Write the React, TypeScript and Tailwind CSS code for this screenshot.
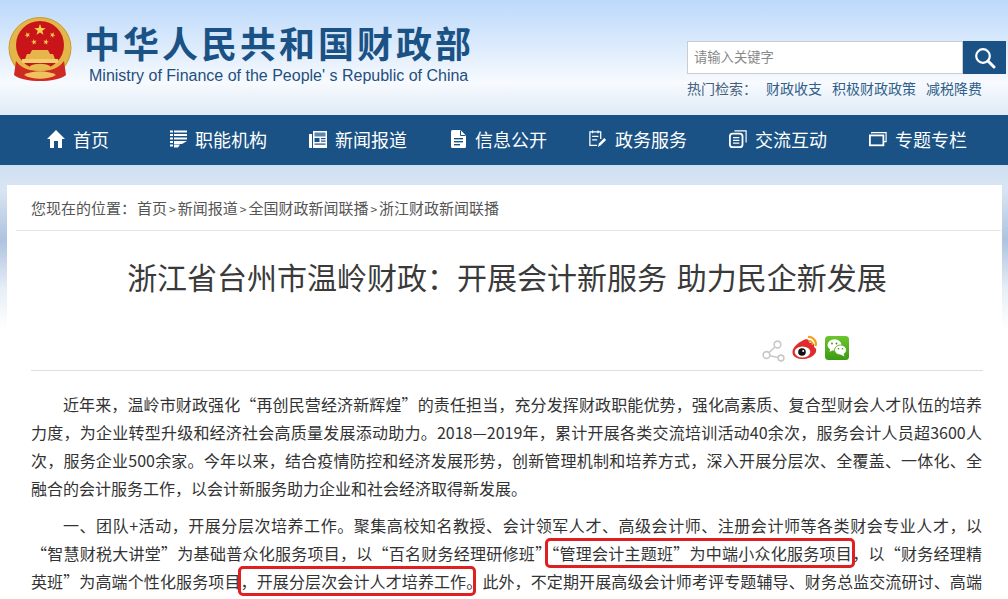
import React from "react";

const cjk = "font-['Noto_Sans_CJK_SC','Liberation_Sans',sans-serif]";

function Emblem() {
  const star = (cx: number, cy: number, r: number, rot = 0) => {
    const pts: string[] = [];
    for (let i = 0; i < 10; i++) {
      const a = (Math.PI / 5) * i - Math.PI / 2 + rot;
      const rr = i % 2 === 0 ? r : r * 0.4;
      pts.push(`${(cx + rr * Math.cos(a)).toFixed(2)},${(cy + rr * Math.sin(a)).toFixed(2)}`);
    }
    return <polygon key={`${cx}-${cy}`} points={pts.join(" ")} fill="#f5d04a" />;
  };
  return (
    <svg width="64" height="68" viewBox="0 0 64 68" className="shrink-0">
      <ellipse cx="32" cy="31" rx="31" ry="30.5" fill="#e3b64a" />
      <ellipse cx="32" cy="31" rx="31" ry="30.5" fill="none" stroke="#c99a35" strokeWidth="1" />
      <circle cx="32" cy="28" r="24" fill="#c9151a" />
      {star(32, 13, 6)}
      {star(19.5, 18, 3, -0.4)}
      {star(44.5, 18, 3, 0.4)}
      {star(26, 25, 3, -0.2)}
      {star(38, 25, 3, 0.2)}
      <path d="M17 42 L47 42 L45 37 L42 37 L40 33 L24 33 L22 37 L19 37 Z" fill="#e7b54b" />
      <rect x="14" y="42" width="36" height="4" fill="#f1cf70" />
      <path d="M8 44 C14 52 22 54 32 54 C42 54 50 52 56 44 L58 58 C48 66 16 66 6 58 Z" fill="#cf2a22" />
      <path d="M16 58 C24 53 40 53 48 58 C40 63 24 63 16 58 Z" fill="#eec35d" />
      <path d="M22 49 C27 46 37 46 42 49 L42 52 L22 52 Z" fill="#e8bb52" />
    </svg>
  );
}

const white = "#fff";

function HomeIcon() {
  return (
    <svg width="18" height="18" viewBox="0 0 18 18">
      <path d="M9 0 L18 9 L15 9 L15 18 L11 18 L11 11 L7 11 L7 18 L3 18 L3 9 L0 9 Z" fill={white} />
    </svg>
  );
}
function OrgIcon() {
  return (
    <svg width="17" height="18" viewBox="0 0 17 18" fill={white}>
      <rect x="0" y="0.5" width="3" height="2" />
      <rect x="4" y="0.5" width="13" height="2" />
      <rect x="0" y="4" width="3" height="2" />
      <rect x="4" y="4" width="13" height="2" />
      <rect x="0" y="7.5" width="3" height="2" />
      <rect x="4" y="7.5" width="13" height="2" />
      <rect x="0" y="11" width="3" height="2" />
      <path d="M4 11 H17 L12 14 H4 Z" />
      <rect x="0" y="14.5" width="3" height="2" />
      <path d="M4 14.5 H10 L8 17.5 H4 Z" />
    </svg>
  );
}
function NewsIcon() {
  return (
    <svg width="18" height="18" viewBox="0 0 18 18">
      <path d="M0 4 H3 V18 H1 Q0 18 0 17 Z" fill={white} />
      <rect x="4" y="1" width="14" height="17" fill={white} />
      <rect x="5.5" y="2.5" width="11" height="4" fill="#1a5285" opacity="0.7" />
      <rect x="5.5" y="8" width="5" height="4" fill="#1a5285" />
      <rect x="12" y="8" width="4.5" height="1.2" fill="#1a5285" />
      <rect x="12" y="10.5" width="4.5" height="1.2" fill="#1a5285" />
      <rect x="5.5" y="13.5" width="11" height="1.2" fill="#1a5285" />
    </svg>
  );
}
function DocIcon() {
  return (
    <svg width="15" height="18" viewBox="0 0 15 18">
      <path d="M1.5 0 H9.5 L15 5.5 V16.5 Q15 18 13.5 18 H1.5 Q0 18 0 16.5 V1.5 Q0 0 1.5 0 Z" fill={white} />
      <path d="M9.5 0.5 V5.5 H14.5" fill="none" stroke="#1a5285" strokeWidth="1" />
      <rect x="3" y="8" width="9" height="1.4" fill="#1a5285" />
      <rect x="3" y="11" width="9" height="1.4" fill="#1a5285" />
      <rect x="3" y="14" width="6" height="1.4" fill="#1a5285" />
    </svg>
  );
}
function ServiceIcon() {
  return (
    <svg width="20" height="20" viewBox="0 0 20 20" fill="none" stroke={white} strokeWidth="1.4">
      <path d="M9 17 H1 V2 H13 V10" />
      <path d="M4 0.5 V3.5 M10 0.5 V3.5" />
      <path d="M3.5 7 H10.5 M3.5 11 H9" />
      <path d="M10 19 L11 15 L17 9 L19 11 L13 17 Z" fill={white} stroke="none" />
    </svg>
  );
}
function InteractIcon() {
  return (
    <svg width="20" height="20" viewBox="0 0 20 20" fill="none" stroke={white}>
      <path d="M6 1 H19 V14" strokeWidth="1.3" />
      <rect x="1" y="4" width="14" height="15" rx="3" strokeWidth="2" />
      <path d="M4.5 8.5 H11.5 M4.5 11.5 H11.5 M4.5 14.5 H11.5" strokeWidth="1.4" />
    </svg>
  );
}
function TopicIcon() {
  return (
    <svg width="20" height="16" viewBox="0 0 20 16" fill="none" stroke={white}>
      <path d="M3 2 V1 H19 V11 H16" strokeWidth="1.3" />
      <rect x="1" y="4" width="15" height="11" strokeWidth="2" />
    </svg>
  );
}
function SearchIcon() {
  return (
    <svg width="22" height="22" viewBox="0 0 22 22" fill="none" stroke={white}>
      <circle cx="9" cy="9" r="6.8" strokeWidth="2.2" />
      <path d="M14 14 L20 20" strokeWidth="3" strokeLinecap="round" />
    </svg>
  );
}
function ShareIcon() {
  return (
    <svg width="23" height="22" viewBox="0 0 23 22" fill="none" stroke="#c9c9c9" strokeWidth="1.6">
      <circle cx="4.5" cy="15" r="3.4" />
      <circle cx="15.5" cy="4.5" r="3.4" />
      <circle cx="19" cy="18" r="2.9" />
      <path d="M7 12.5 L13 7 M8 15.8 L16 17.5" />
    </svg>
  );
}
function WeiboIcon() {
  return (
    <svg width="26" height="25" viewBox="0 0 26 25">
      <path d="M10 6 C14 3 18 4 17.5 8 C21 7 23 9 22 12 C24 13 25 15 23.5 18 C21 22 15 24.5 9 24 C4 23.5 0 21 0.5 16.5 C1 12 6 8 10 6 Z" fill="#e02b2f" />
      <ellipse cx="10.5" cy="17" rx="7.8" ry="5.6" fill="#fff" />
      <circle cx="10" cy="17" r="3.8" fill="#111" />
      <circle cx="11.2" cy="16" r="1" fill="#fff" />
      <path d="M16 2 C21 1.5 25 6 23.6 11" fill="none" stroke="#efa21f" strokeWidth="2.2" />
      <path d="M16.5 6 C19 5.5 21 7.5 20.4 10" fill="none" stroke="#efa21f" strokeWidth="1.8" />
    </svg>
  );
}
function WechatIcon() {
  return (
    <svg width="24" height="24" viewBox="0 0 24 24">
      <defs>
        <linearGradient id="wg" x1="0" y1="0" x2="0" y2="1">
          <stop offset="0" stopColor="#6cc62e" />
          <stop offset="1" stopColor="#3c9a12" />
        </linearGradient>
      </defs>
      <rect width="24" height="24" rx="3.5" fill="url(#wg)" />
      <ellipse cx="9.5" cy="9" rx="7" ry="5.8" fill="#fff" />
      <path d="M5.5 12.5 L4.5 16 L9 13.5 Z" fill="#fff" />
      <ellipse cx="15.5" cy="14" rx="6" ry="5" fill="#fff" stroke="#4aa81a" strokeWidth="0.8" />
      <path d="M18.5 17.5 L19.5 20.5 L15.5 18.5 Z" fill="#fff" />
      <circle cx="7" cy="7.5" r="0.9" fill="#4a8a1e" />
      <circle cx="11.5" cy="7.5" r="0.9" fill="#4a8a1e" />
      <circle cx="13.5" cy="12.8" r="0.8" fill="#4a8a1e" />
      <circle cx="17.5" cy="12.8" r="0.8" fill="#4a8a1e" />
    </svg>
  );
}

const navItems: { label: string; icon: React.ReactNode; width: string }[] = [
  { label: "首页", icon: <HomeIcon />, width: "w-[122px]" },
  { label: "职能机构", icon: <OrgIcon />, width: "w-[140px]" },
  { label: "新闻报道", icon: <NewsIcon />, width: "w-[140px]" },
  { label: "信息公开", icon: <DocIcon />, width: "w-[140px]" },
  { label: "政务服务", icon: <ServiceIcon />, width: "w-[140px]" },
  { label: "交流互动", icon: <InteractIcon />, width: "w-[140px]" },
  { label: "专题专栏", icon: <TopicIcon />, width: "w-[140px]" },
];

const box = "outline-3 outline-[#e02020] rounded-[2px]";

export default function App() {
  return (
    <div
      className={`${cjk} h-[599px] w-[1008px] overflow-hidden bg-[linear-gradient(180deg,#cfdff2_165px,#d9e5f3_190px,#adc3e0_240px,#e8eff7_290px,#ffffff_330px)]`}
    >
      <header className="flex h-[115px] justify-between bg-[linear-gradient(180deg,#bcd9fb_0%,#dcebfc_40%,#f7fafe_72%,#dfeaf6_100%)]">
        <div className="flex pl-[8px] pt-[17px]">
          <Emblem />
          <div className="pl-[12px]">
            <div className="text-[36px] leading-[50px] font-bold tracking-[3px] whitespace-nowrap text-[#1a5285]">
              中华人民共和国财政部
            </div>
            <div className="pl-[5px] font-['Liberation_Sans',sans-serif] text-[16px] leading-[18px] whitespace-nowrap text-[#1f4f7f]">
              Ministry of Finance of the People' s Republic of China
            </div>
          </div>
        </div>
        <div className="w-[321px] pt-[41px]">
          <div className="flex h-[33px] w-[319px]">
            <div className="flex flex-1 items-center border border-[#cccccc] bg-white pb-[2px] pl-[6px] text-[13.3px] text-[#888888]">
              请输入关键字
            </div>
            <div className="flex w-[43px] items-center justify-center bg-[#1a5285]">
              <SearchIcon />
            </div>
          </div>
          <div className="mt-[4px] flex text-[14px] leading-[20px] whitespace-nowrap text-[#2f5f8a]">
            <span className="w-[79px] text-[#44607c]">热门检索：</span>
            <span className="w-[66px]">财政收支</span>
            <span className="w-[94px]">积极财政政策</span>
            <span>减税降费</span>
          </div>
        </div>
      </header>

      <nav className="flex h-[50px] items-center bg-[#1a5285] pb-[2px] pl-[47px] text-[18px] text-white">
        {navItems.map((n) => (
          <div key={n.label} className={`flex shrink-0 items-center ${n.width}`}>
            <span className="flex w-[18px] justify-center">{n.icon}</span>
            <span className="ml-[8px] whitespace-nowrap">{n.label}</span>
          </div>
        ))}
      </nav>

      <main className="mt-[20px] ml-[7px] w-[995px] bg-white pr-[1px] pl-[9px] pt-[11px]">
        <div className="border-b border-[#e5e5e5] pb-[10px] pl-[15px] text-[15px] leading-[23px] whitespace-nowrap text-[#555555]">
          您现在的位置：<span className="ml-[1px]">首页</span>
          <span className="mx-[2px] text-[12px]">&gt;</span>新闻报道
          <span className="mx-[2px] text-[12px]">&gt;</span>全国财政新闻联播
          <span className="mx-[2px] text-[12px]">&gt;</span>浙江财政新闻联播
        </div>
        <h1 className="pt-[23px] pr-[3px] text-center text-[30px] leading-[44px] whitespace-nowrap text-[#3a3a3a] [word-spacing:3px]">
          浙江省台州市温岭财政：开展会计新服务 助力民企新发展
        </h1>
        <div className="mr-[18px] ml-[15px] flex h-[73px] items-end border-b border-[#dddddd] pb-[9px] pl-[731px]">
          <span className="mr-[7px] mb-[-1px]"><ShareIcon /></span>
          <span className="mr-[7px] mb-[1px]"><WeiboIcon /></span>
          <span className="mb-[1px]"><WechatIcon /></span>
        </div>
        <article className="ml-[15px] w-[951px] pt-[19px] text-justify text-[16px] leading-[28px] text-[#333333]">
          <p className="mb-[9px] indent-[32px]">
            近年来，温岭市财政强化“再创民营经济新辉煌”的责任担当，充分发挥财政职能优势，强化高素质、复合型财会人才队伍的培养力度，为企业转型升级和经济社会高质量发展添动助力。2018—2019年，累计开展各类交流培训活动40余次，服务会计人员超3600人次，服务企业500余家。今年以来，结合疫情防控和经济发展形势，创新管理机制和培养方式，深入开展分层次、全覆盖、一体化、全融合的会计服务工作，以会计新服务助力企业和社会经济取得新发展。
          </p>
          <p className="indent-[32px] [text-align-last:justify]">
            一、团队+活动，开展分层次培养工作。聚集高校知名教授、会计领军人才、高级会计师、注册会计师等各类财会专业人才，以<wbr />“智慧财税大讲堂”为基础普众化服务项目，以“百名财务经理研修班”<span className={`${box} ml-[-3px] pl-[3px]`}>“管理会计主题班”为中端小众化服务项目</span>，以“财务经理精<wbr />英班”为高端个性化服务项目<span className={box}>，开展分层次会计人才培养工作<span className="mr-[-9px]">。</span></span><span className="ml-[9px]">此外，不定期开展高级会计师考评专题辅导、财务总监交流研讨、高端</span>
          </p>
        </article>
      </main>
    </div>
  );
}
